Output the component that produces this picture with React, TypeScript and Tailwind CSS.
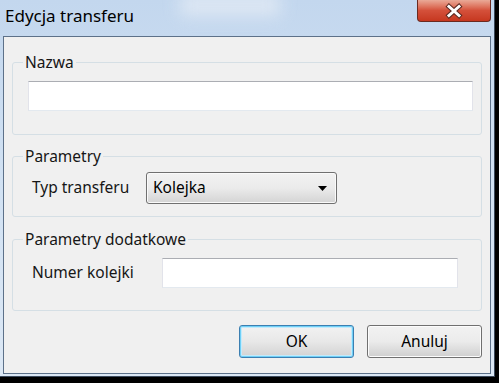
import React from "react";

const font = { fontFamily: '"Noto Sans", "Open Sans", sans-serif' };

function Group({ title, children, className = "" }: { title: string; children: React.ReactNode; className?: string }) {
  return (
    <fieldset className={`border border-[#d5dfe5] rounded-[3px] mx-[8px] ${className}`}>
      <legend className="ml-[10px] px-[2px] text-[15.5px] leading-[18px] text-[#161616]">{title}</legend>
      {children}
    </fieldset>
  );
}

export default function App() {
  return (
    <div className="w-[499px] h-[383px] bg-black overflow-hidden" style={font}>
      <div className="w-[495px] h-[377px] border-r border-b border-[#3c4a5c] bg-gradient-to-b from-[#c3d7ee] via-[#d2e2f3] to-[#dce8f5] flex flex-col">
        {/* title bar */}
        <div className="h-[36px] flex items-start relative">
          <div className="absolute left-[180px] top-[-6px] w-[100px] h-[22px] bg-[#e8eef6] opacity-70 blur-[8px]" />
          <div className="relative pl-[5px] pt-[5px] text-[17px] leading-[22px] text-black">Edycja transferu</div>
          <div className="relative ml-auto mr-[3px] w-[74px] h-[22px] rounded-b-[4px] border border-t-0 border-[#6b2a20] bg-gradient-to-b from-[#e9a997] via-[#d4503a] to-[#c6371f] flex items-center justify-center">
            <svg width="20" height="16" viewBox="0 0 20 16">
              <path d="M5 3.5 L15 12.5 M15 3.5 L5 12.5" stroke="#5a2a22" strokeWidth="5" strokeLinecap="square" />
              <path d="M5 3.5 L15 12.5 M15 3.5 L5 12.5" stroke="#ffffff" strokeWidth="3" strokeLinecap="square" />
            </svg>
          </div>
        </div>
        {/* client area */}
        <div className="ml-[3px] mr-[3px] h-[338px] border border-[#5d7189] bg-[#f0f0f0] flex flex-col pt-[16px]">
          <Group title="Nazwa">
            <div className="ml-[15px] mr-[8px] mt-[10px] mb-[23px] h-[30px] bg-white border border-[#e2e3ea] border-t-[#abadb3] border-b-[#e3e9ef]" />
          </Group>
          <Group title="Parametry" className="mt-[12px]">
            <div className="flex items-center mt-[7px] mb-[12px]">
              <span className="ml-[19px] w-[114px] text-[15.5px] text-[#161616]">Typ transferu</span>
              <div className="w-[191px] h-[32px] rounded-[3px] border border-[#707070] shadow-[inset_0_0_0_1px_#fafafa] bg-gradient-to-b from-[#f2f2f2] via-[#ebebeb] to-[#d4d4d4] flex items-center pl-[6px] pr-[9px]">
                <span className="text-[15.5px] text-black flex-1">Kolejka</span>
                <svg width="9" height="5" viewBox="0 0 9 5"><path d="M0 0 L9 0 L4.5 5 Z" fill="#000" /></svg>
              </div>
            </div>
          </Group>
          <Group title="Parametry dodatkowe" className="mt-[13px]">
            <div className="flex items-center mt-[10px] mb-[22px]">
              <span className="ml-[19px] w-[130px] text-[15.5px] text-[#161616]">Numer kolejki</span>
              <div className="w-[296px] h-[30px] bg-white border border-[#e2e3ea] border-t-[#abadb3] border-b-[#e3e9ef]" />
            </div>
          </Group>
          <div className="flex justify-end gap-[13px] mr-[8px] mt-[14px]">
            <button className="w-[115px] h-[33px] rounded-[3px] border border-[#3c7fb1] shadow-[inset_0_0_0_1px_#6fd0f7,inset_0_0_0_2px_#c4eafb] bg-gradient-to-b from-[#f2f2f2] via-[#e8e8e8] to-[#d2d2d2] text-[15.5px] text-black">OK</button>
            <button className="w-[115px] h-[33px] rounded-[3px] border border-[#707070] shadow-[inset_0_0_0_1px_#fcfcfc] bg-gradient-to-b from-[#f2f2f2] via-[#ebebeb] to-[#cfcfcf] text-[15.5px] text-black">Anuluj</button>
          </div>
        </div>
      </div>
    </div>
  );
}
